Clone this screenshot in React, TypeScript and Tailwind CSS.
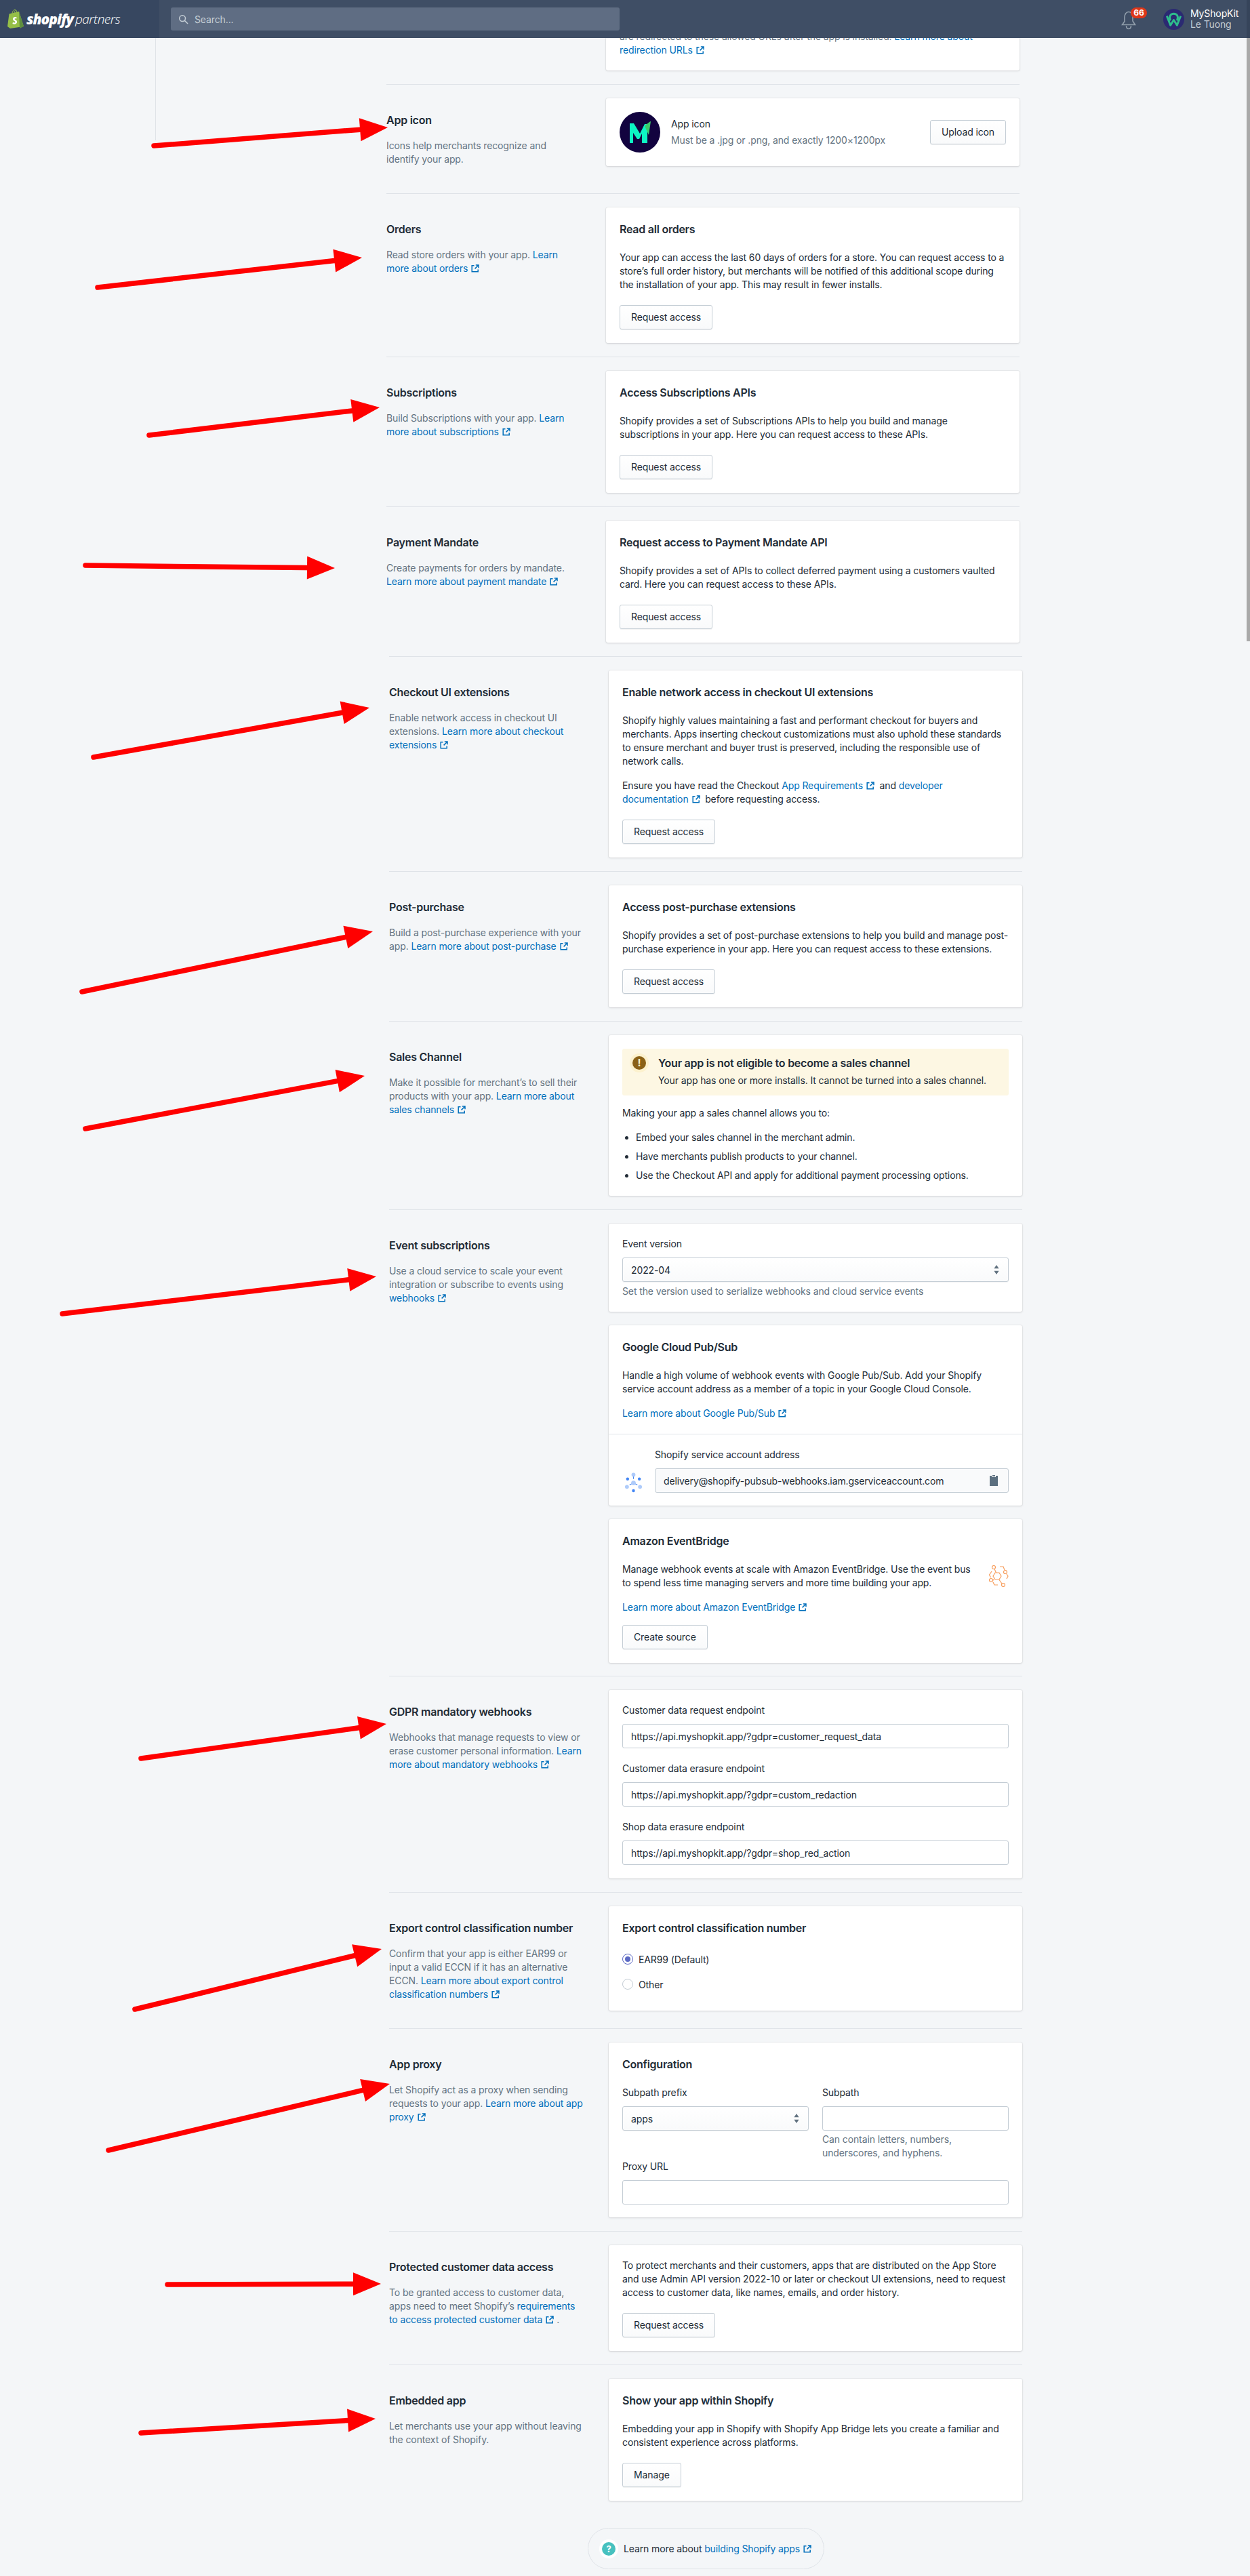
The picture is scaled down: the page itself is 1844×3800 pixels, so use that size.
import React from "react";

const ExtIcon = () => (
  <svg viewBox="0 0 12 12" className="inline-block w-[12px] h-[12px] ml-[5px] align-[-1px]" fill="none" stroke="currentColor" strokeWidth="1.5">
    <path d="M4.5 1.8H1.2v9h9V7.5" />
    <path d="M6.8 1h4.2v4.2M11 1 5.6 6.4" />
  </svg>
);

const L = ({ children }: { children: React.ReactNode }) => (
  <span className="text-[#006fbb]">
    {children}
    <ExtIcon />
  </span>
);

const Btn = ({ children }: { children: React.ReactNode }) => (
  <button className="h-[36px] px-[16px] rounded-[3px] border border-[#c4cdd5] bg-gradient-to-b from-white to-[#f9fafb] shadow-[0_1px_0_rgba(22,29,37,0.05)] text-[14px] leading-[20px] text-[#212b36]">
    {children}
  </button>
);

const H = ({ children }: { children: React.ReactNode }) => (
  <h2 className="text-[16px] leading-[24px] font-semibold tracking-[-0.25px] text-[#212b36]">{children}</h2>
);

const Card = ({ children, className = "" }: { children: React.ReactNode; className?: string }) => (
  <div className={"bg-white rounded-[3px] shadow-[0_0_0_1px_rgba(63,63,68,0.05),0_1px_3px_0_rgba(63,63,68,0.15)] " + className}>{children}</div>
);

const Section = ({
  title,
  desc,
  children,
  first,
  pb = "pb-5",
}: {
  title?: string;
  desc?: React.ReactNode;
  children: React.ReactNode;
  first?: boolean;
  pb?: string;
}) => (
  <section className={"flex gap-[38px] " + (first ? "" : "pt-5 border-t border-[#dfe3e8] ") + pb}>
    <div className="w-[286px] pt-5 pb-5 shrink-0">
      {title && <h2 className="text-[16px] leading-[24px] font-semibold tracking-[-0.25px] text-[#212b36] mb-4">{title}</h2>}
      {desc && <p className="text-[14px] leading-[20px] text-[#637381]">{desc}</p>}
    </div>
    <div className="w-[610px] shrink-0 flex flex-col gap-5">{children}</div>
  </section>
);

const Field = ({ label, value, className = "" }: { label: string; value?: string; className?: string }) => (
  <div className={className}>
    <div className="text-[14px] leading-[20px] text-[#212b36] mb-[10px]">{label}</div>
    <div className="h-[36px] px-[12px] flex items-center bg-white border border-[#c4cdd5] rounded-[3px] text-[14px] text-[#212b36]">{value}</div>
  </div>
);

const Stepper = () => (
  <svg viewBox="0 0 10 16" className="w-[10px] h-[16px]" fill="#637381">
    <path d="M5 1 8.6 6.2H1.4zM5 15 1.4 9.8h7.2z" />
  </svg>
);

const Select = ({ value }: { value: string }) => (
  <div className="h-[36px] pl-[12px] pr-[12px] flex items-center justify-between rounded-[3px] border border-[#c4cdd5] bg-gradient-to-b from-white to-[#f9fafb] shadow-[0_1px_0_rgba(22,29,37,0.05)] text-[14px] text-[#212b36]">
    <span>{value}</span>
    <Stepper />
  </div>
);

const Arrow = ({ t, h }: { t: [number, number]; h: [number, number] }) => {
  const dx = h[0] - t[0];
  const dy = h[1] - t[1];
  const len = Math.hypot(dx, dy);
  const ux = dx / len;
  const uy = dy / len;
  const bx = h[0] - ux * 41;
  const by = h[1] - uy * 41;
  const nx = -uy * 17;
  const ny = ux * 17;
  return (
    <g>
      <line x1={t[0]} y1={t[1]} x2={bx} y2={by} stroke="#ff0000" strokeWidth="7.5" strokeLinecap="round" />
      <polygon points={`${h[0]},${h[1]} ${bx + nx},${by + ny} ${bx - nx},${by - ny}`} fill="#ff0000" />
    </g>
  );
};

const arrows: { t: [number, number]; h: [number, number] }[] = [
  { t: [227, 215], h: [572, 188] },
  { t: [144, 424], h: [534, 380] },
  { t: [220, 642], h: [560, 601] },
  { t: [126, 834], h: [494, 838] },
  { t: [138, 1117], h: [545, 1044] },
  { t: [121, 1463], h: [550, 1374] },
  { t: [126, 1665], h: [538, 1587] },
  { t: [92, 1938], h: [555, 1883] },
  { t: [208, 2594], h: [570, 2543] },
  { t: [199, 2964], h: [563, 2875] },
  { t: [160, 3172], h: [575, 3074] },
  { t: [247, 3370], h: [562, 3369] },
  { t: [208, 3589], h: [554, 3568] },
];

const Header = () => (
  <header className="sticky top-0 z-10 h-14 flex bg-[#3f4e65]">
    <div className="w-[235px] h-full bg-[#374760] flex items-center pl-[11px]">
      <svg viewBox="0 0 24 28" className="w-[24px] h-[28px] mt-[-1px] shrink-0">
        <path d="M2.5 6.5 17 3l7 22-20 3L0 25z" fill="#95bf47" />
        <path d="M17 3l7 22-6 3z" fill="#5e8e3e" />
        <path d="M7 6c0-3 2-5.5 4-5.5s3 2 3 4.5M10 5.5C10 3 11 1.500 12.500 1.500" fill="none" stroke="#95bf47" strokeWidth="1" />
        <path d="M13.500 11.500c-3-1.200-5.500.3-5.500 2.500 0 3 3.500 2.600 3.500 4.500 0 1.300-2 1.300-3.500.3l-.6 2.200c2.500 1.400 6.700.8 6.700-2.700 0-3-3.500-2.800-3.500-4.300 0-1 1.400-1.100 2.700-.5z" fill="#fff" />
      </svg>
      <span className="ml-[4px] [font-family:'Open_Sans',sans-serif] italic font-extrabold text-[21px] leading-[28px] tracking-[-1px] text-white">shopify</span>
      <span className="ml-[3px] [font-family:'Open_Sans',sans-serif] italic font-light text-[19px] leading-[28px] tracking-[-0.5px] text-white">partners</span>
    </div>
    <div className="flex-1 flex items-center pl-[17px]">
      <div className="w-[662px] h-[34px] rounded-[3px] bg-[#5f6d83] flex items-center pl-[11px] text-[14px] text-[#c4cdd5]">
        <svg viewBox="0 0 16 16" className="w-[15px] h-[15px]" fill="none" stroke="#c4cdd5" strokeWidth="1.600">
          <circle cx="6.500" cy="6.500" r="4.700" />
          <path d="m10 10 5 5" />
        </svg>
        <span className="ml-[9px]">Search...</span>
      </div>
    </div>
    <div className="relative w-[28px] mr-[34px] flex items-center">
      <svg viewBox="0 0 22 28" className="w-[22px] h-[28px] mt-[3px]" fill="none" stroke="#919eab" strokeWidth="1.600">
        <path d="M11 1.500c-4 0-6 4-6 8v6l-3.500 5h19L17 15V9.500c0-4-2-8-6-8z" />
        <path d="M7.500 22c0 3 1.500 4.500 3.500 4.500s3.500-1.500 3.500-4.500" />
      </svg>
      <span className="absolute left-[14px] top-[11px] w-[24px] h-[16px] rounded-full bg-[#de3618] text-white text-[12px] leading-[16px] font-bold text-center">66</span>
    </div>
    <div className="flex items-center w-[123px]">
      <svg viewBox="0 0 32 32" className="w-[31px] h-[31px] shrink-0" fill="none">
        <circle cx="16" cy="16" r="16" fill="#2b2a72" />
        <path d="M11 18C8 12 11 7.500 16 7.500S24 12 21 18" stroke="#2ebd8c" strokeWidth="3" />
        <path d="M5.500 11 11 25l5-8 5 8 5.500-14" stroke="#2ebd8c" strokeWidth="3" strokeLinejoin="round" />
      </svg>
      <div className="ml-[9px] text-[14px] leading-[16px]">
        <div className="text-white">MyShopKit</div>
        <div className="text-[#c4cdd5] mt-[0px]">Le Tuong</div>
      </div>
    </div>
    <div className="w-[5px] bg-[#36445a]" />
  </header>
);

const RadioRow = ({ on, label }: { on?: boolean; label: string }) => (
  <div className="flex items-center gap-[8px] h-[20px] text-[14px] text-[#212b36]">
    <span className={"w-[16px] h-[16px] rounded-full border flex items-center justify-center bg-white " + (on ? "border-[#5c6ac4]" : "border-[#c4cdd5]")}>
      {on && <span className="w-[8px] h-[8px] rounded-full bg-[#5c6ac4]" />}
    </span>
    {label}
  </div>
);

const P = ({ children, className = "" }: { children: React.ReactNode; className?: string }) => (
  <p className={"text-[14px] leading-[20px] text-[#212b36] " + className}>{children}</p>
);

const BodyCard = ({ title, body, btn }: { title: string; body: React.ReactNode; btn: string }) => (
  <Card className="p-5">
    <H>{title}</H>
    <P className="mt-5">{body}</P>
    <div className="mt-5 flex">
      <Btn>{btn}</Btn>
    </div>
  </Card>
);

export default function App() {
  return (
    <div className="relative w-[1844px] h-[3800px] overflow-hidden bg-[#f4f6f8] [font-family:Inter,sans-serif] tracking-[-0.12px]">
      <Header />
      <div className="absolute left-[229px] top-[56px] w-px h-[151px] bg-[#dfe3e8]" />
      <main className="-mt-3">
        <div className="ml-[570px] w-[934px]">
          <Section first>
            <Card className="px-5 pb-5">
              <P className="text-[#637381]">
                are redirected to these allowed URLs after the app is installed. <span className="text-[#006fbb]">Learn more about</span>
                <br />
                <L>redirection URLs</L>
              </P>
            </Card>
          </Section>
          <Section title="App icon" desc="Icons help merchants recognize and identify your app.">
            <Card className="p-5 flex items-center">
              <svg viewBox="0 0 60 60" className="w-[60px] h-[60px] shrink-0">
                <circle cx="30" cy="30" r="30" fill="#12033f" />
                <path d="M15 46V17h6l9 15 7-14h7l-3 4v24h-8V32l-4 8h-3l-6-9v15z" fill="#0df5c4" />
                <path d="M37 21c2-2 6-6 9-7l-3 20z" fill="#3dca6b" />
              </svg>
              <div className="ml-4 flex-1">
                <div className="text-[14px] leading-[20px] text-[#212b36]">App icon</div>
                <div className="text-[14px] leading-[20px] text-[#637381] mt-[4px]">Must be a .jpg or .png, and exactly 1200×1200px</div>
              </div>
              <Btn>Upload icon</Btn>
            </Card>
          </Section>
          <Section title="Orders" desc={<>Read store orders with your app. <L>Learn more about orders</L></>}>
            <BodyCard
              title="Read all orders"
              body="Your app can access the last 60 days of orders for a store. You can request access to a store’s full order history, but merchants will be notified of this additional scope during the installation of your app. This may result in fewer installs."
              btn="Request access"
            />
          </Section>
          <Section title="Subscriptions" desc={<>Build Subscriptions with your app. <L>Learn more about subscriptions</L></>}>
            <BodyCard
              title="Access Subscriptions APIs"
              body="Shopify provides a set of Subscriptions APIs to help you build and manage subscriptions in your app. Here you can request access to these APIs."
              btn="Request access"
            />
          </Section>
          <Section title="Payment Mandate" desc={<>Create payments for orders by mandate. <L>Learn more about payment mandate</L></>}>
            <BodyCard
              title="Request access to Payment Mandate API"
              body="Shopify provides a set of APIs to collect deferred payment using a customers vaulted card. Here you can request access to these APIs."
              btn="Request access"
            />
          </Section>
        </div>
        <div className="ml-[574px] w-[934px]">
          <Section title="Checkout UI extensions" desc={<>Enable network access in checkout UI extensions. <L>Learn more about checkout extensions</L></>}>
            <Card className="p-5">
              <H>Enable network access in checkout UI extensions</H>
              <P className="mt-5">
                Shopify highly values maintaining a fast and performant checkout for buyers and merchants. Apps inserting checkout customizations must also uphold these standards to ensure merchant and buyer trust is preserved, including the responsible use of network calls.
              </P>
              <P className="mt-4">
                Ensure you have read the Checkout <L>App Requirements</L>&nbsp; and <L>developer documentation</L>&nbsp; before requesting access.
              </P>
              <div className="mt-5 flex">
                <Btn>Request access</Btn>
              </div>
            </Card>
          </Section>
          <Section title="Post-purchase" desc={<>Build a post-purchase experience with your app. <L>Learn more about post-purchase</L></>}>
            <BodyCard
              title="Access post-purchase extensions"
              body="Shopify provides a set of post-purchase extensions to help you build and manage post-purchase experience in your app. Here you can request access to these extensions."
              btn="Request access"
            />
          </Section>
          <Section title="Sales Channel" desc={<>Make it possible for merchant’s to sell their products with your app. <span className="text-[#006fbb]">Learn more about</span> <L>sales channels</L></>}>
            <Card className="p-5">
              <div className="flex bg-[#fdf7e3] rounded-[3px] pt-[9px] pb-[12px] pl-[11px] pr-4">
                <span className="w-[28px] h-[28px] mt-[-2px] rounded-full bg-[#fcf1cd] flex items-center justify-center shrink-0">
                  <span className="w-[20px] h-[20px] rounded-full bg-[#8a6116] text-[#fcf1cd] text-[15px] leading-[20px] font-bold text-center">!</span>
                </span>
                <div className="ml-[14px]">
                  <div className="text-[16px] leading-[24px] font-semibold tracking-[-0.25px] text-[#212b36]">Your app is not eligible to become a sales channel</div>
                  <P className="mt-[4px]">Your app has one or more installs. It cannot be turned into a sales channel.</P>
                </div>
              </div>
              <P className="mt-4">Making your app a sales channel allows you to:</P>
              <ul className="mt-4 flex flex-col gap-2 list-disc pl-5 text-[14px] leading-[20px] text-[#212b36]">
                <li>Embed your sales channel in the merchant admin.</li>
                <li>Have merchants publish products to your channel.</li>
                <li>Use the Checkout API and apply for additional payment processing options.</li>
              </ul>
            </Card>
          </Section>
          <Section pb="pb-[19px]" title="Event subscriptions" desc={<>Use a cloud service to scale your event integration or subscribe to events using <L>webhooks</L></>}>
            <Card className="p-5">
              <div className="text-[14px] leading-[20px] text-[#212b36] mb-[10px]">Event version</div>
              <Select value="2022-04" />
              <div className="mt-[4px] text-[14px] leading-[20px] text-[#637381]">Set the version used to serialize webhooks and cloud service events</div>
            </Card>
            <Card>
              <div className="p-5 border-b border-[#dfe3e8]">
                <H>Google Cloud Pub/Sub</H>
                <P className="mt-5">Handle a high volume of webhook events with Google Pub/Sub. Add your Shopify service account address as a member of a topic in your Google Cloud Console.</P>
                <P className="mt-4"><L>Learn more about Google Pub/Sub</L></P>
              </div>
              <div className="pt-5 px-5 pb-[19px] flex items-end">
                <svg viewBox="0 0 28 32" className="w-[27px] h-[31px] ml-[3px] mb-[-1px] shrink-0">
                  <g stroke="#4285f4" strokeWidth="1.200">
                    <path d="M14 5v5M14 16l-6 3M14 16l6 3" />
                  </g>
                  <circle cx="14" cy="3.500" r="3" fill="#aecbfa" />
                  <circle cx="14" cy="16" r="3.500" fill="#aecbfa" />
                  <circle cx="4" cy="22" r="3" fill="#aecbfa" />
                  <circle cx="24" cy="22" r="3" fill="#aecbfa" />
                  <circle cx="5" cy="10" r="2.300" fill="#4285f4" />
                  <circle cx="23" cy="10" r="2.300" fill="#4285f4" />
                  <circle cx="14" cy="28" r="2.300" fill="#4285f4" />
                </svg>
                <div className="ml-[18px] flex-1">
                  <div className="text-[14px] leading-[20px] text-[#212b36] mb-[10px]">Shopify service account address</div>
                  <div className="h-[36px] pl-[12px] pr-[15px] flex items-center justify-between bg-[#f9fafb] border border-[#c4cdd5] rounded-[3px] text-[14px] text-[#212b36]">
                    <span>delivery@shopify-pubsub-webhooks.iam.gserviceaccount.com</span>
                    <svg viewBox="0 0 12 16" className="w-[12px] h-[16px]" fill="#5c7080">
                      <path d="M0 1h3v2h6V1h3v15H0z" />
                      <path d="M4 0h4v2H4z" />
                    </svg>
                  </div>
                </div>
              </div>
            </Card>
            <Card className="p-5">
              <H>Amazon EventBridge</H>
              <div className="mt-5 flex justify-between">
                <P className="w-[515px]">Manage webhook events at scale with Amazon EventBridge. Use the event bus to spend less time managing servers and more time building your app.</P>
                <svg viewBox="0 0 30 32" className="w-[30px] h-[32px] mt-[4px]" fill="none" stroke="#f79d5c" strokeWidth="1.200">
                  <path d="m10 11 6 0 3 5-3 5h-6l-3-5z" />
                  <circle cx="8" cy="3" r="2.500" />
                  <circle cx="25" cy="10" r="2.500" />
                  <circle cx="4" cy="22" r="2.500" />
                  <circle cx="22" cy="29" r="2.500" />
                  <path d="M9 5.500 11.500 11M16 21.500 20 27M6.500 22.500 8 21M17 2h5l2 5M27 13l2 3-2 4M7 25l2 4h5M5 9 1.500 14l2 4" />
                </svg>
              </div>
              <P className="mt-4"><L>Learn more about Amazon EventBridge</L></P>
              <div className="mt-4 flex">
                <Btn>Create source</Btn>
              </div>
            </Card>
          </Section>
          <Section title="GDPR mandatory webhooks" desc={<>Webhooks that manage requests to view or erase customer personal information. <span className="text-[#006fbb]">Learn</span> <L>more about mandatory webhooks</L></>}>
            <Card className="p-5 flex flex-col gap-5">
              <Field label="Customer data request endpoint" value="https://api.myshopkit.app/?gdpr=customer_request_data" />
              <Field label="Customer data erasure endpoint" value="https://api.myshopkit.app/?gdpr=custom_redaction" />
              <Field label="Shop data erasure endpoint" value="https://api.myshopkit.app/?gdpr=shop_red_action" />
            </Card>
          </Section>
          <Section title="Export control classification number" desc={<>Confirm that your app is either EAR99 or input a valid ECCN if it has an alternative ECCN. <L>Learn more about export control classification numbers</L></>}>
            <Card className="p-5 pb-[29px]">
              <H>Export control classification number</H>
              <div className="mt-[24px] flex flex-col gap-[17px]">
                <RadioRow on label="EAR99 (Default)" />
                <RadioRow label="Other" />
              </div>
            </Card>
          </Section>
          <Section title="App proxy" desc={<>Let Shopify act as a proxy when sending requests to your app. <L>Learn more about app proxy</L></>}>
            <Card className="pt-5 px-5 pb-[19px]">
              <H>Configuration</H>
              <div className="mt-5 flex gap-5">
                <div className="flex-1">
                  <div className="text-[14px] leading-[20px] text-[#212b36] mb-[10px]">Subpath prefix</div>
                  <Select value="apps" />
                </div>
                <div className="flex-1">
                  <Field label="Subpath" />
                  <div className="mt-[3px] text-[14px] leading-[20px] text-[#637381]">Can contain letters, numbers, underscores, and hyphens.</div>
                </div>
              </div>
              <Field label="Proxy URL" />
            </Card>
          </Section>
          <Section title="Protected customer data access" desc={<>To be granted access to customer data, apps need to meet Shopify’s <L>requirements to access protected customer data</L>&nbsp;.</>}>
            <Card className="p-5">
              <P>To protect merchants and their customers, apps that are distributed on the App Store and use Admin API version 2022-10 or later or checkout UI extensions, need to request access to customer data, like names, emails, and order history.</P>
              <div className="mt-5 flex">
                <Btn>Request access</Btn>
              </div>
            </Card>
          </Section>
          <Section title="Embedded app" desc="Let merchants use your app without leaving the context of Shopify." pb="pb-10">
            <BodyCard
              title="Show your app within Shopify"
              body="Embedding your app in Shopify with Shopify App Bridge lets you create a familiar and consistent experience across platforms."
              btn="Manage"
            />
          </Section>
        </div>
        <div className="ml-[867px] w-[349px] h-[61px] rounded-full border border-[#dfe3e8] flex items-center pl-[16px] text-[14px] text-[#212b36]">
          <span className="w-[28px] h-[28px] rounded-full bg-white flex items-center justify-center shrink-0">
            <span className="w-[20px] h-[20px] rounded-full bg-[#47c1bf] text-white text-[13px] leading-[20px] font-bold text-center">?</span>
          </span>
          <span className="ml-[8px]">Learn more about <L>building Shopify apps</L></span>
        </div>
      </main>
      <div className="absolute right-0 top-[56px] w-[5px] h-[890px] bg-[#a9a9a9]" />
      <svg className="absolute left-0 top-0 w-[1844px] h-[3800px] pointer-events-none" viewBox="0 0 1844 3800">
        {arrows.map((a, i) => (
          <Arrow key={i} t={a.t} h={a.h} />
        ))}
      </svg>
    </div>
  );
}
